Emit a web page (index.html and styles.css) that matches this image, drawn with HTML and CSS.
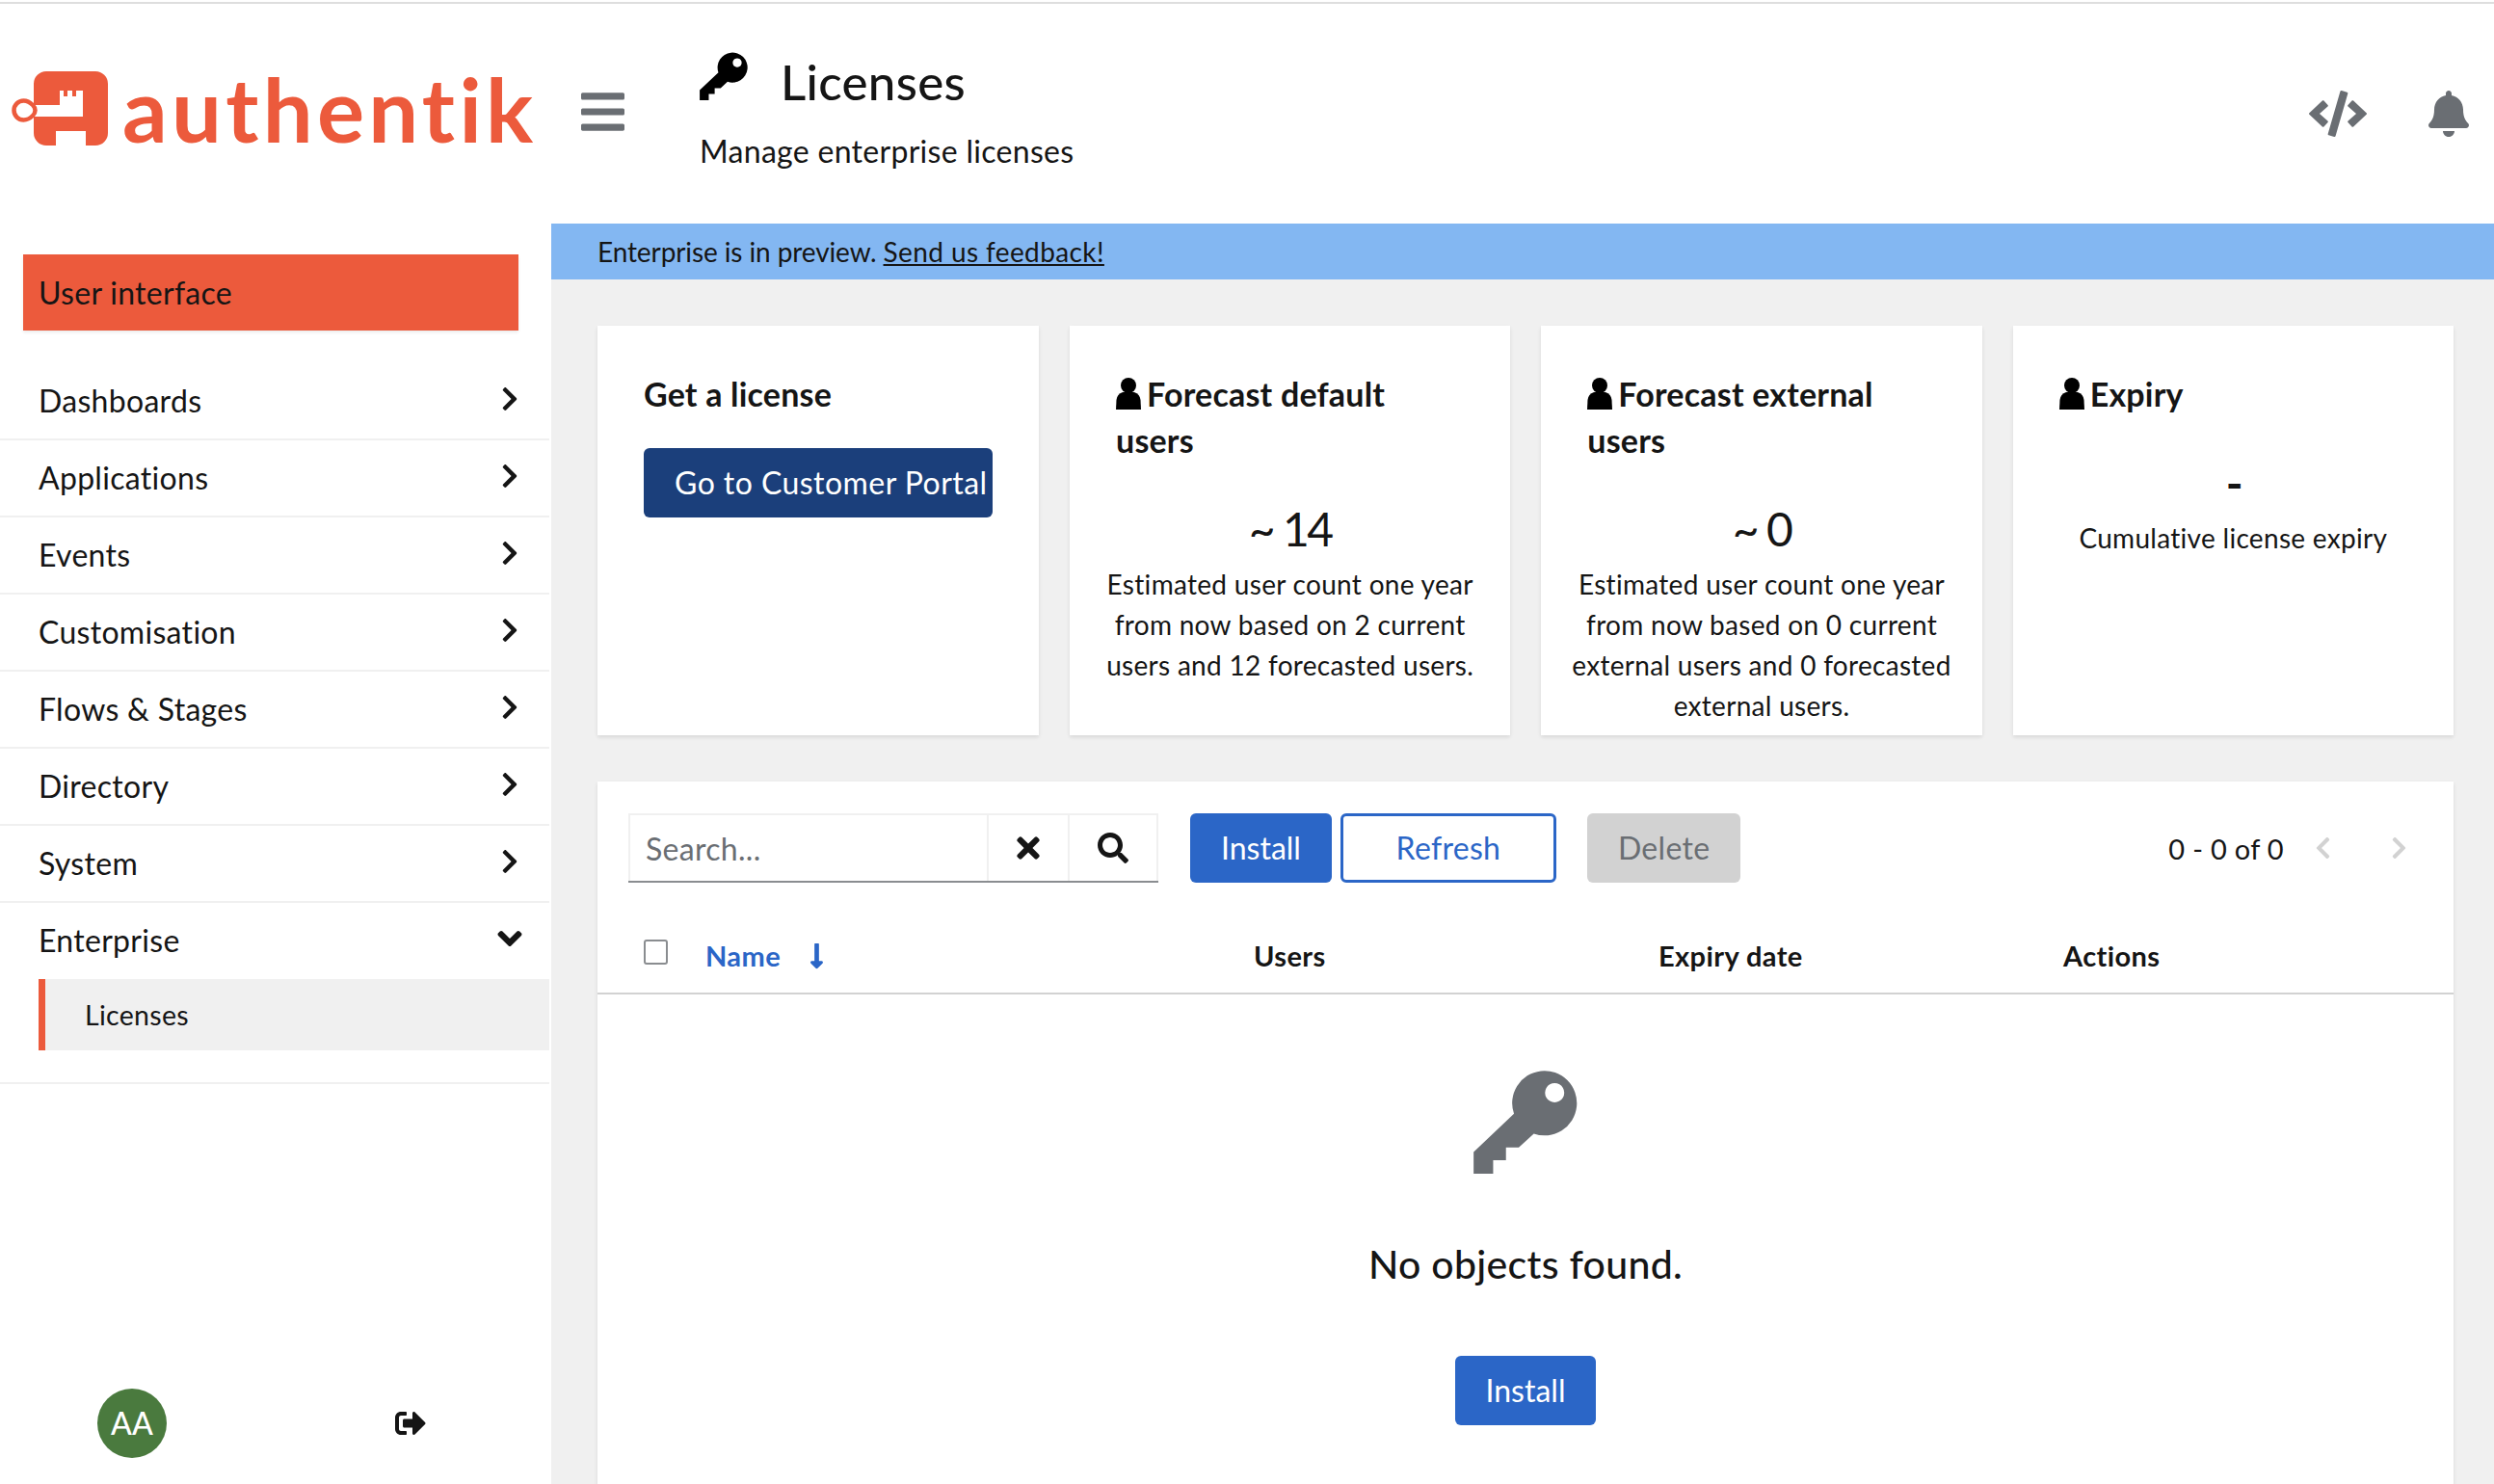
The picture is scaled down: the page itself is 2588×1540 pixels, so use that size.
FILE: index.html
```html
<!DOCTYPE html>
<html lang="en">
<head>
    <meta charset="UTF-8">
    <title>Licenses - authentik</title>
    <link rel="stylesheet" href="styles.css">
</head>
<body>
    <svg class="icon-defs">
        <symbol id="i-key" viewBox="0 0 324 325"><path fill-rule="evenodd" d="M0 257L126 138A101 101 0 1 1 188 200L141 243H101V283H61V325H0ZM253 42a30 30 0 1 0 .01 0Z"/></symbol>
        <symbol id="i-user" viewBox="0 0 26 33"><circle cx="13" cy="8" r="8"/><path d="M7 15h12c4 1.500 6 4 6.500 8L26 33H0l.5-10C1 19 3 16.500 7 15Z"/></symbol>
        <symbol id="i-right" viewBox="0 0 320 512"><path d="M285.476 272.971L91.132 467.314c-9.373 9.373-24.569 9.373-33.941 0l-22.667-22.667c-9.357-9.357-9.375-24.522-.04-33.901L188.505 256 34.484 101.255c-9.335-9.379-9.317-24.544.04-33.901l22.667-22.667c9.373-9.373 24.569-9.373 33.941 0L285.475 239.030c9.373 9.372 9.373 24.568.001 33.941z"/></symbol>
        <symbol id="i-left" viewBox="0 0 320 512"><path d="M34.520 239.030L228.870 44.690c9.370-9.370 24.570-9.370 33.940 0l22.670 22.670c9.360 9.360 9.370 24.520.04 33.900L131.490 256l154.020 154.750c9.340 9.380 9.320 24.540-.04 33.900l-22.670 22.670c-9.370 9.370-24.570 9.370-33.940 0L34.520 272.970c-9.370-9.370-9.370-24.570 0-33.940z"/></symbol>
    </svg>

    <div class="top-line"></div>
    <header class="header">
        <div class="brand">
            <svg class="brand-mark" viewBox="0 0 100 78">
                <path fill="#ec5a3c" d="M36 0H87a13 13 0 0 1 13 13V64a13 13 0 0 1-13 13H77V62H46V77H36a13 13 0 0 1-13-13V13A13 13 0 0 1 36 0Z"/>
                <path fill="#fff" d="M23 35H50V20H54V26H58V20H63V26H67V20H74V47H23Z"/>
                <path fill="#fff" stroke="#ec5a3c" stroke-width="4.500" d="M2.500 40.500a10 10 0 0 1 10-10c3 0 6.500 1.500 9.500 4.500 1.500 1.500 2.500 3.500 2.500 5.500s-1 4-2.500 5.500c-3 3-6.500 4.500-9.500 4.500a10 10 0 0 1-10-10Z"/>
            </svg>
            <span class="brand-name">authentik</span>
        </div>
        <svg class="burger" viewBox="0 0 448 512"><path d="M16 132h416c8.837 0 16-7.163 16-16V76c0-8.837-7.163-16-16-16H16C7.163 60 0 67.163 0 76v40c0 8.837 7.163 16 16 16zm0 160h416c8.837 0 16-7.163 16-16v-40c0-8.837-7.163-16-16-16H16c-8.837 0-16 7.163-16 16v40c0 8.837 7.163 16 16 16zm0 160h416c8.837 0 16-7.163 16-16v-40c0-8.837-7.163-16-16-16H16c-8.837 0-16 7.163-16 16v40c0 8.837 7.163 16 16 16z"/></svg>
        <div class="page-title">
            <h1><svg class="title-key"><use href="#i-key"/></svg>Licenses</h1>
            <p>Manage enterprise licenses</p>
        </div>
        <div class="header-tools">
            <svg class="tool-code" viewBox="0 0 640 512"><path d="M278.9 511.5l-61-17.7c-6.4-1.8-10-8.5-8.2-14.9L346.2 8.7c1.8-6.4 8.5-10 14.9-8.2l61 17.7c6.4 1.8 10 8.5 8.2 14.9L293.8 503.3c-1.9 6.4-8.500 10.100-14.900 8.200zm-114-112.200l43.500-46.400c4.600-4.900 4.300-12.700-.8-17.200L117 256l90.600-79.700c5.100-4.500 5.500-12.300.8-17.200l-43.500-46.400c-4.500-4.800-12.100-5.100-17-.5L3.800 247.200c-5.100 4.700-5.100 12.800 0 17.500l144.100 135.100c4.900 4.600 12.500 4.400 17-.5zm327.200.6l144.100-135.100c5.100-4.700 5.100-12.800 0-17.500L492.100 112.100c-4.800-4.500-12.400-4.300-17 .5L431.600 159c-4.600 4.900-4.300 12.700.8 17.200L523 256l-90.600 79.700c-5.100 4.500-5.500 12.300-.8 17.200l43.500 46.400c4.500 4.900 12.100 5.100 17 .6z"/></svg>
            <svg class="tool-bell" viewBox="0 0 448 512"><path d="M224 512c35.320 0 63.970-28.650 63.970-64H160.030c0 35.350 28.650 64 63.970 64zm215.390-149.710c-19.320-20.760-55.470-51.990-55.470-154.290 0-77.700-54.480-139.900-127.940-155.160V32c0-17.670-14.320-32-31.980-32s-31.980 14.330-31.980 32v20.840C118.560 68.100 64.080 130.300 64.080 208c0 102.300-36.150 133.530-55.470 154.290-6 6.450-8.660 14.160-8.610 21.710.11 16.400 12.980 32 32.100 32h383.800c19.120 0 32-15.600 32.100-32 .05-7.550-2.610-15.270-8.610-21.710z"/></svg>
        </div>
    </header>

    <div class="layout">
        <aside class="sidebar">
            <div class="sidebar-top">User interface</div>
            <nav class="nav">
                <div class="nav-item">Dashboards<svg class="chev"><use href="#i-right"/></svg></div>
                <div class="nav-item">Applications<svg class="chev"><use href="#i-right"/></svg></div>
                <div class="nav-item">Events<svg class="chev"><use href="#i-right"/></svg></div>
                <div class="nav-item">Customisation<svg class="chev"><use href="#i-right"/></svg></div>
                <div class="nav-item">Flows &amp; Stages<svg class="chev"><use href="#i-right"/></svg></div>
                <div class="nav-item">Directory<svg class="chev"><use href="#i-right"/></svg></div>
                <div class="nav-item">System<svg class="chev"><use href="#i-right"/></svg></div>
                <div class="nav-group">
                    <div class="nav-item nav-open">Enterprise<svg class="chev-down" viewBox="0 0 320 512"><path d="M143 352.300L7 216.300c-9.400-9.400-9.400-24.600 0-33.900l22.600-22.600c9.400-9.400 24.600-9.400 33.900 0l96.400 96.400 96.400-96.400c9.400-9.400 24.600-9.400 33.900 0l22.600 22.600c9.400 9.400 9.400 24.600 0 33.900l-136 136c-9.200 9.400-24.400 9.400-33.800 0z"/></svg></div>
                    <div class="nav-sub">Licenses</div>
                </div>
            </nav>
            <div class="sidebar-foot">
                <div class="avatar">AA</div>
                <svg class="logout" viewBox="0 0 512 512"><path d="M497 273L329 441c-15 15-41 4.500-41-17v-96H152c-13.300 0-24-10.700-24-24v-96c0-13.300 10.700-24 24-24h136V88c0-21.400 25.900-32 41-17l168 168c9.300 9.400 9.300 24.600 0 34zM192 436v-40c0-6.600-5.400-12-12-12H96c-17.700 0-32-14.300-32-32V160c0-17.700 14.300-32 32-32h84c6.600 0 12-5.400 12-12V76c0-6.600-5.400-12-12-12H96c-53 0-96 43-96 96v192c0 53 43 96 96 96h84c6.600 0 12-5.400 12-12z"/></svg>
            </div>
        </aside>

        <main class="main">
            <div class="banner">Enterprise is in preview. <a href="#">Send us feedback!</a></div>
            <div class="content">
                <section class="cards">
                    <div class="card">
                        <h2 class="card-title">Get a license</h2>
                        <a class="btn btn-portal" href="#">Go to Customer Portal</a>
                    </div>
                    <div class="card">
                        <h2 class="card-title"><svg class="user-icon"><use href="#i-user"/></svg>Forecast default users</h2>
                        <div class="card-value">~ 14</div>
                        <p class="card-desc">Estimated user count one year from now based on 2 current users and 12 forecasted users.</p>
                    </div>
                    <div class="card">
                        <h2 class="card-title"><svg class="user-icon"><use href="#i-user"/></svg>Forecast external users</h2>
                        <div class="card-value">~ 0</div>
                        <p class="card-desc">Estimated user count one year from now based on 0 current external users and 0 forecasted external users.</p>
                    </div>
                    <div class="card">
                        <h2 class="card-title"><svg class="user-icon"><use href="#i-user"/></svg>Expiry</h2>
                        <div class="card-value card-value-dash">-</div>
                        <p class="card-desc">Cumulative license expiry</p>
                    </div>
                </section>

                <section class="table-card">
                    <div class="toolbar">
                        <div class="search">
                            <input class="search-input" type="text" placeholder="Search...">
                            <div class="search-btn search-clear">
                                <svg class="icon-times" viewBox="0 0 352 512"><path d="M242.720 256l100.070-100.070c12.280-12.280 12.280-32.190 0-44.480l-22.240-22.240c-12.280-12.280-32.190-12.280-44.480 0L176 189.280 75.930 89.210c-12.280-12.280-32.190-12.280-44.480 0L9.210 111.450c-12.280 12.280-12.280 32.190 0 44.480L109.280 256 9.210 356.070c-12.280 12.280-12.280 32.190 0 44.480l22.240 22.240c12.280 12.280 32.200 12.280 44.480 0L176 322.720l100.070 100.070c12.280 12.280 32.200 12.280 44.480 0l22.240-22.240c12.280-12.280 12.280-32.190 0-44.480L242.720 256z"/></svg>
                            </div>
                            <div class="search-btn search-go">
                                <svg class="icon-search" viewBox="0 0 512 512"><path d="M505 442.700L405.300 343c-4.500-4.500-10.600-7-17-7H372c27.600-35.300 44-79.700 44-128C416 93.100 322.900 0 208 0S0 93.100 0 208s93.100 208 208 208c48.300 0 92.700-16.400 128-44v16.300c0 6.400 2.500 12.500 7 17l99.700 99.700c9.400 9.400 24.600 9.400 33.900 0l28.300-28.300c9.400-9.400 9.400-24.600.1-34zM208 336c-70.700 0-128-57.200-128-128 0-70.700 57.200-128 128-128 70.700 0 128 57.200 128 128 0 70.700-57.200 128-128 128z"/></svg>
                            </div>
                        </div>
                        <a class="btn btn-install" href="#">Install</a>
                        <a class="btn btn-refresh" href="#">Refresh</a>
                        <a class="btn btn-delete" href="#">Delete</a>
                        <div class="pager">
                            <span class="pager-text">0 - 0 of 0</span>
                            <svg class="pager-arrow"><use href="#i-left"/></svg>
                            <svg class="pager-arrow pager-next"><use href="#i-right"/></svg>
                        </div>
                    </div>
                    <div class="table-head">
                        <div class="cell-check"><span class="checkbox"></span></div>
                        <div class="cell-name">Name<svg class="sort-arrow" viewBox="0 0 256 512"><path d="M168 345.941V44c0-6.627-5.373-12-12-12h-56c-6.627 0-12 5.373-12 12v301.941H41.941c-21.382 0-32.090 25.851-16.971 40.971l86.059 86.059c9.373 9.373 24.569 9.373 33.941 0l86.059-86.059c15.119-15.119 4.411-40.971-16.971-40.971H168z"/></svg></div>
                        <div>Users</div>
                        <div>Expiry date</div>
                        <div>Actions</div>
                    </div>
                    <div class="empty">
                        <svg class="empty-key"><use href="#i-key"/></svg>
                        <h3 class="empty-title">No objects found.</h3>
                        <a class="btn btn-install" href="#">Install</a>
                    </div>
                </section>
            </div>
        </main>
    </div>
</body>
</html>
```

FILE: styles.css
```css
* {
    box-sizing: border-box;
}

html, body {
    height: 100%;
    margin: 0;
    overflow: hidden;
}

body {
    display: flex;
    flex-direction: column;
    background: #fff;
    color: #151515;
    font-family: "Lato", "Noto Sans", sans-serif;
    font-size: 32px;
    letter-spacing: .3px;
}

h1, h2, h3, p {
    margin: 0;
    font-weight: inherit;
    font-size: inherit;
}

.icon-defs {
    display: none;
}

.top-line {
    flex: none;
    height: 2px;
    margin-top: 2px;
    background: #dedede;
}

/* header */
.header {
    flex: none;
    display: flex;
    align-items: center;
    height: 228px;
}

.brand {
    flex: none;
    display: flex;
    align-items: center;
    width: 603px;
    height: 100%;
    padding: 0 0 4px 12px;
}

.brand-mark {
    width: 100px;
    height: 78px;
    margin-top: -6px;
}

.brand-name {
    margin-left: 15px;
    margin-top: -6px;
    color: #ec5a3c;
    font-size: 92px;
    font-weight: 700;
    line-height: 1;
    letter-spacing: 4.300px;
}

.burger {
    flex: none;
    width: 45px;
    height: 52px;
    margin-top: -4px;
    fill: #6a6e73;
}

.page-title {
    margin-left: 78px;
    margin-top: -6px;
}

.page-title h1 {
    display: flex;
    align-items: center;
    font-size: 51px;
    font-weight: 500;
    line-height: 72px;
    height: 72px;
}

.title-key {
    width: 50px;
    height: 50px;
    margin-right: 34px;
    margin-top: -12px;
}

.page-title p {
    margin-top: 12px;
    line-height: 48px;
}

.header-tools {
    margin-left: auto;
    display: flex;
    align-items: center;
    gap: 64px;
    padding-right: 26px;
}

.tool-code {
    width: 60px;
    height: 48px;
    fill: #6a6e73;
}

.tool-bell {
    width: 42px;
    height: 48px;
    fill: #6a6e73;
}

/* sidebar + main */
.layout {
    flex: 1;
    display: flex;
    min-height: 0;
}

.sidebar {
    flex: none;
    display: flex;
    flex-direction: column;
    width: 572px;
    padding: 32px 2px 0 0;
}

.sidebar-top {
    width: 514px;
    height: 79px;
    margin-left: 24px;
    padding-left: 16px;
    background: #ec5a3c;
    line-height: 79px;
    box-shadow: 0 2px 3px rgba(0, 0, 0, .08);
}

.nav {
    margin-top: 34px;
}

.nav-item {
    display: flex;
    align-items: center;
    justify-content: space-between;
    height: 80px;
    padding: 0 32px 2px 40px;
    border-bottom: 2px solid #f0f0f0;
}

.nav-open {
    height: 79px;
    border-bottom: 0;
}

.nav-group {
    padding-bottom: 33px;
    border-bottom: 2px solid #f0f0f0;
}

.nav-sub {
    height: 74px;
    margin-left: 40px;
    padding-left: 41px;
    border-left: 7px solid #ec5a3c;
    background: #f0f0f0;
    font-size: 28.500px;
    line-height: 74px;
}

.chev {
    width: 18px;
    height: 28px;
    margin-top: -2px;
    fill: #151515;
}

.chev-down {
    width: 26px;
    height: 40px;
    margin-right: -4px;
    margin-top: -4px;
    fill: #151515;
}

.sidebar-foot {
    margin-top: auto;
    display: flex;
    align-items: center;
    padding: 0 0 27px 101px;
}

.avatar {
    width: 72px;
    height: 72px;
    border-radius: 50%;
    background: #4a7a3e;
    color: #fff;
    font-size: 32px;
    font-weight: 500;
    line-height: 72px;
    text-align: center;
}

.logout {
    width: 32px;
    height: 32px;
    margin-left: 237px;
    fill: #151515;
}

.main {
    flex: 1;
    min-width: 0;
    background: #f0f0f0;
}

.banner {
    height: 58px;
    padding-left: 48px;
    background: #83b7f2;
    font-size: 28px;
    line-height: 58px;
    letter-spacing: -.1px;
}

.banner a {
    color: #151515;
    letter-spacing: .4px;
}

.content {
    padding: 48px 42px 0 48px;
}

/* cards */
.cards {
    display: grid;
    grid-template-columns: repeat(4, 1fr);
    gap: 32px;
    height: 425px;
}

.card {
    padding: 47px 24px 0;
    background: #fff;
    box-shadow: 0 2px 4px rgba(3, 3, 3, .1);
    text-align: center;
}

.card-title {
    padding: 0 24px;
    font-size: 34px;
    font-weight: 700;
    line-height: 48px;
    letter-spacing: .2px;
    text-align: left;
}

.user-icon {
    width: 26px;
    height: 33px;
    margin-right: 6px;
    vertical-align: -3px;
}

.card-value {
    margin-top: 35px;
    font-size: 48px;
    line-height: 66px;
    letter-spacing: -2.500px;
}

.card-value-dash {
    font-weight: 700;
}

.card-desc {
    margin-top: 3px;
    font-size: 28px;
    line-height: 42px;
}

.btn {
    display: inline-block;
    height: 72px;
    padding: 0 32px;
    border-radius: 6px;
    font-size: 32px;
    line-height: 72px;
    text-decoration: none;
    white-space: nowrap;
}

.btn-portal {
    display: block;
    width: 362px;
    margin: 32px 24px 0;
    background: #1b3f7b;
    color: #fff;
    overflow: hidden;
    letter-spacing: .45px;
    text-align: left;
}

.btn-install {
    background: #2b66c7;
    color: #fff;
    letter-spacing: 0;
}

.btn-refresh {
    width: 224px;
    margin-left: 9px;
    border: 3px solid #2b66c7;
    background: #fff;
    color: #2b66c7;
    line-height: 66px;
    text-align: center;
}

.btn-delete {
    margin-left: 32px;
    background: #d2d2d2;
    color: #6a6e73;
}

/* table */
.table-card {
    height: 800px;
    margin-top: 48px;
    background: #fff;
    box-shadow: 0 2px 4px rgba(3, 3, 3, .1);
}

.toolbar {
    display: flex;
    align-items: center;
    padding: 33px 32px 0;
}

.search {
    display: flex;
    width: 550px;
    height: 72px;
    margin-right: 33px;
    border-top: 2px solid #f0f0f0;
    border-bottom: 2px solid #8a8d90;
}

.search-input {
    flex: 1;
    min-width: 0;
    padding: 0 16px;
    border: 0;
    border-left: 2px solid #f0f0f0;
    outline: none;
    font-family: inherit;
    font-size: 32px;
    letter-spacing: .3px;
    color: #151515;
}

.search-input::placeholder {
    color: #6a6e73;
    opacity: 1;
}

.search-btn {
    display: flex;
    align-items: center;
    justify-content: center;
    border-left: 2px solid #f0f0f0;
    fill: #151515;
}

.search-clear {
    width: 84px;
}

.search-go {
    width: 94px;
    border-right: 2px solid #f0f0f0;
}

.icon-times {
    width: 24px;
    height: 34px;
}

.icon-search {
    width: 32px;
    height: 32px;
}

.pager {
    margin-left: auto;
    display: flex;
    align-items: center;
    padding-right: 16px;
    font-size: 29px;
}

.pager-arrow {
    width: 17px;
    height: 26px;
    margin-left: 32px;
    fill: #d2d2d2;
}

.pager-next {
    margin-left: 62px;
}

.table-head {
    display: grid;
    grid-template-columns: 112px 569px 420px 420px 1fr;
    align-items: center;
    height: 82px;
    margin-top: 34px;
    border-bottom: 2px solid #d2d2d2;
    font-size: 29px;
    font-weight: 700;
    letter-spacing: .4px;
}

.table-head > div {
    padding-top: 3px;
}

.cell-check {
    padding-left: 48px;
    display: flex;
}

.checkbox {
    width: 25px;
    height: 26px;
    margin-top: -8px;
    border: 2px solid #8a8d90;
    border-radius: 3px;
}

.cell-name {
    display: flex;
    align-items: center;
    color: #2b66c7;
}

.sort-arrow {
    width: 15px;
    height: 30px;
    margin-left: 30px;
    fill: #2b66c7;
}

.empty {
    display: flex;
    flex-direction: column;
    align-items: center;
    padding-top: 78px;
}

.empty-key {
    width: 108px;
    height: 108px;
    fill: #6a6e73;
}

.empty-title {
    margin: 64px 0 65px;
    font-size: 41px;
    font-weight: 500;
    line-height: 60px;
}
```
